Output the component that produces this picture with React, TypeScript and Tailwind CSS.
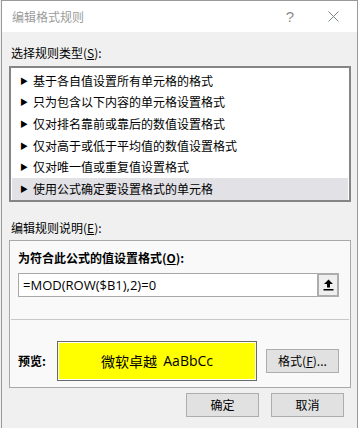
const rules = [
  "基于各自值设置所有单元格的格式",
  "只为包含以下内容的单元格设置格式",
  "仅对排名靠前或靠后的数值设置格式",
  "仅对高于或低于平均值的数值设置格式",
  "仅对唯一值或重复值设置格式",
  "使用公式确定要设置格式的单元格",
];

const cjk = { fontFamily: '"Noto Sans CJK SC", "Noto Sans", sans-serif' };

export default function App() {
  return (
    <div className="w-[358px] h-[428px] overflow-hidden bg-[#f0f0f0] pl-px" style={cjk}>
      <div className="h-full border-l border-r border-t border-[#9a9a9a] flex flex-col text-[12px] leading-[16px] text-black">
        {/* title bar */}
        <div className="h-[31px] bg-white flex items-center pl-[10px] pr-[18px]">
          <span className="text-[#9b9b9b] text-[12px]">编辑格式规则</span>
          <span className="ml-auto mr-[34px] text-[#8c8c8c] text-[15px]" style={{ fontFamily: '"Liberation Sans", sans-serif' }}>?</span>
          <svg width="11" height="11" viewBox="0 0 11 11" className="mb-px">
            <path d="M0.5 0.5 L10.5 10.5 M10.5 0.5 L0.5 10.5" stroke="#7a8a7a" strokeWidth="1" />
          </svg>
        </div>

        <div className="flex-1 pl-[7px] pr-[6px] pt-[13px]">
          <div className="pl-[2px]">
            选择规则类型(<span className="underline">S</span>):
          </div>

          {/* rule list */}
          <div className="mt-[5px] h-[136px] border-2 border-[#858585] bg-white pt-[2px] px-px">
            {rules.map((r, i) => (
              <div
                key={r}
                className={`h-[21.6px] flex items-center pl-[8px] ${i === rules.length - 1 ? "bg-[#e1e1e6]" : ""}`}
              >
                <span className="text-[8px] leading-none w-[13px]">▶</span>
                <span>{r}</span>
              </div>
            ))}
          </div>

          <div className="mt-[18px] pl-[2px]">
            编辑规则说明(<span className="underline">E</span>):
          </div>

          {/* description panel */}
          <div className="mt-[4px] h-[148px] border border-[#a8a8a8] bg-[#f9f9f9] pt-[9px]">
            <div className="px-[8px] font-bold">
              为符合此公式的值设置格式(<span className="underline">O</span>):
            </div>
            <div className="mt-[7px] ml-[8px] w-[321px] h-[24px] border border-[#a8a8a8] bg-white flex items-center">
              <span className="pl-[4px] text-[13px]" style={{ fontFamily: '"Open Sans", "Noto Sans", sans-serif' }}>
                =MOD(ROW($B1),2)=0
              </span>
              <div className="ml-auto h-[24px] w-[22px] -mr-px border-2 border-[#adadad] bg-[#efefef] flex items-center justify-center">
                <svg width="11" height="12" viewBox="0 0 11 12">
                  <path d="M5.5 0.5 L10 5 L7 5 L7 8.5 L4 8.5 L4 5 L1 5 Z" fill="#000" />
                  <rect x="0.5" y="10" width="10" height="1.5" fill="#000" />
                </svg>
              </div>
            </div>

            <div className="mt-[22px] mx-px border-t border-[#c8c8c8]" />

            <div className="mt-[21px] flex items-center pl-[8px]">
              <span className="w-[39px] font-bold">预览:</span>
              <div className="w-[200px] h-[40px] border border-[#6a6a6a] bg-white p-px">
                <div className="h-full bg-[#ffff00] flex items-center justify-center text-[14px]">
                  微软卓越&nbsp;&nbsp;<span style={{ fontFamily: '"Open Sans", "Noto Sans", sans-serif' }}>AaBbCc</span>
                </div>
              </div>
              <button className="ml-[9px] w-[73px] h-[24px] border border-[#adadad] bg-[#e1e1e1] text-[12px]">
                格式(<span className="underline">F</span>)...
              </button>
            </div>
          </div>

          {/* footer buttons */}
          <div className="mt-[5px] flex justify-end gap-[12px] pr-[7px]">
            <button className="w-[73px] h-[24px] border border-[#adadad] bg-[#e1e1e1]">确定</button>
            <button className="w-[73px] h-[24px] border border-[#adadad] bg-[#e1e1e1]">取消</button>
          </div>
        </div>
      </div>
    </div>
  );
}
